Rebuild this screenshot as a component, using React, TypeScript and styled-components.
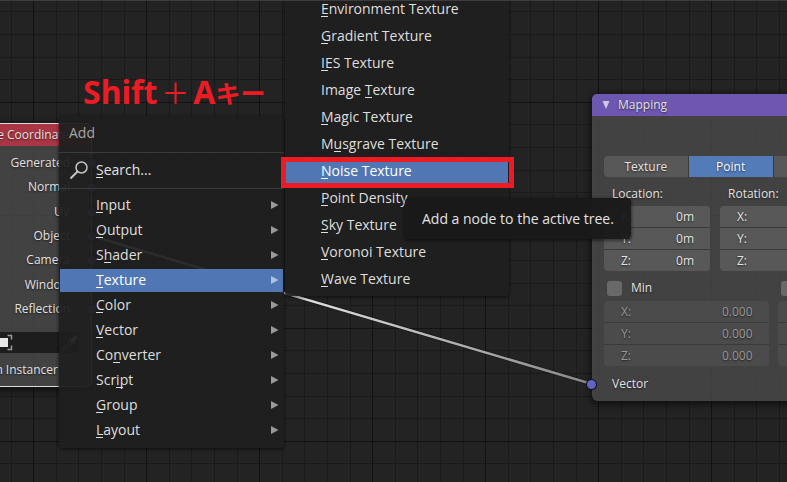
import React from "react";
import styled, { createGlobalStyle, css } from "styled-components";

const GlobalStyle = createGlobalStyle`
  * { box-sizing: border-box; }
  body { margin: 0; background: #232323; }
  button, input { font: inherit; color: inherit; }
`;

const Editor = styled.main`
  position: relative;
  min-height: 100vh;
  overflow: hidden;
  border-top: 1px solid #3c3c3c;
  color: #e2e2e2;
  font-family: "Open Sans", "Noto Sans", sans-serif;
  font-size: 14px;
  line-height: 20px;
  background-color: #232323;
  background-position: 33px 101px;
  background-size: 113px 113px;
  background-image:
    linear-gradient(90deg, #131313 1px, transparent 1px),
    linear-gradient(#131313 1px, transparent 1px),
    linear-gradient(90deg, transparent 23px, #1a1a1a 23px 24px, transparent 24px 45px, #1a1a1a 45px 46px, transparent 46px 68px, #1a1a1a 68px 69px, transparent 69px 91px, #1a1a1a 91px 92px, transparent 92px),
    linear-gradient(transparent 22px, #1a1a1a 22px 23px, transparent 23px 45px, #1a1a1a 45px 46px, transparent 46px 68px, #1a1a1a 68px 69px, transparent 69px 90px, #1a1a1a 90px 91px, transparent 91px);
`;

const Links = styled.svg`
  position: absolute;
  top: 0;
  left: 0;
  width: 100%;
  height: 100%;
`;

/* Nodes on the canvas */

const Node = styled.section`
  position: absolute;
  border-radius: 6px;
  background: rgba(72, 72, 72, 0.85);
  box-shadow: 0 2px 6px 2px rgba(0, 0, 0, 0.5);
  font-size: 12px;
  text-shadow: 0 1px 2px rgba(0, 0, 0, 0.6);
`;

const CoordinateNode = styled(Node)`
  top: 122px;
  left: -66px;
  width: 158px;
  border: 1px solid #dcdcdc;
`;

const MappingNode = styled(Node)`
  top: 93px;
  left: 592px;
  width: 362px;
`;

const NodeHeader = styled.header<{ $tone: string }>`
  display: flex;
  align-items: center;
  gap: 8px;
  height: 22px;
  padding: 0 10px;
  border-radius: 5px 5px 0 0;
  background: ${(p) => p.$tone};
`;

const NodeTitle = styled.h2`
  margin: 0;
  font: inherit;
  white-space: nowrap;
`;

const Outputs = styled.ul`
  display: grid;
  grid-auto-rows: 1fr;
  align-items: center;
  height: 170px;
  margin: 5px 0 0;
  padding: 0;
  list-style: none;
`;

const Output = styled.li`
  position: relative;
  padding-right: 21px;
  text-align: right;
`;

const Socket = styled.span<{ $side: "left" | "right" }>`
  position: absolute;
  top: 50%;
  ${(p) => p.$side}: -5px;
  width: 9px;
  height: 9px;
  margin-top: -4px;
  border-radius: 50%;
  background: #6363c7;
  box-shadow: 0 0 0 1px #111;
`;

const ObjectField = styled.div`
  display: flex;
  align-items: center;
  justify-content: space-between;
  height: 21px;
  margin: 11px 12px 0 49px;
  border-radius: 4px;
  background: #1d1d1d;
`;

const Instancer = styled.p`
  margin: 7px 33px 6px 12px;
  text-align: right;
  white-space: nowrap;
`;

const NodeBody = styled.div`
  padding: 40px 12px 7px;
`;

const Modes = styled.div`
  display: grid;
  grid-template-columns: repeat(4, 1fr);
  gap: 1px;
  overflow: hidden;
  border-radius: 4px;
  background: #383838;
`;

const Mode = styled.button<{ $active?: boolean }>`
  height: 21px;
  padding: 0;
  border: 0;
  background: ${(p) => (p.$active ? "#527bb7" : "#585858")};
  color: ${(p) => (p.$active ? "#ffffff" : "#e2e2e2")};
  text-shadow: inherit;
`;

const Vectors = styled.div`
  display: grid;
  grid-template-columns: repeat(3, 1fr);
  gap: 10px;
  margin-top: 7px;
`;

const Limits = styled.div`
  display: grid;
  grid-template-columns: repeat(2, 1fr);
  gap: 9px;
  margin-top: 7px;
`;

const Group = styled.fieldset`
  min-width: 0;
  margin: 0;
  padding: 0;
  border: 0;
`;

const GroupTitle = styled.legend`
  height: 22px;
  padding: 0 8px;
`;

const Fields = styled.div<{ $dim?: boolean }>`
  display: grid;
  grid-template-columns: minmax(0, 1fr);
  gap: 1px;
  overflow: hidden;
  border-radius: 4px;
  background: #3a3a3a;
  ${(p) =>
    p.$dim &&
    css`
      color: #989898;
    `}
`;

const Field = styled.label<{ $dim?: boolean }>`
  display: flex;
  height: 21px;
  align-items: center;
  padding: 0 16px 0 17px;
  background: ${(p) => (p.$dim ? "#4b4b4b" : "#585858")};
`;

const FieldInput = styled.input`
  flex: 1;
  min-width: 0;
  padding: 0;
  border: 0;
  background: transparent;
  text-align: right;
  text-shadow: inherit;
`;

const Check = styled.label`
  display: flex;
  align-items: center;
  gap: 9px;
  height: 20px;
  margin-bottom: 3px;
  padding-left: 3px;
`;

const CheckBox = styled.input`
  appearance: none;
  width: 15px;
  height: 15px;
  margin: 0;
  border-radius: 3px;
  background: #696969;
`;

const InputSocket = styled.div`
  position: relative;
  margin: 8px -12px 0;
  padding-left: 20px;
`;

/* Pop-up menus */

const Menu = styled.nav`
  position: absolute;
  background: rgba(31, 31, 31, 0.94);
  box-shadow: 0 1px 3px 1px rgba(0, 0, 0, 0.4);
`;

const AddMenu = styled(Menu)`
  top: 115px;
  left: 59px;
  width: 225px;
  padding-bottom: 6px;
  border-radius: 4px;
`;

const TextureMenu = styled(Menu)`
  top: -6px;
  left: 285px;
  width: 224px;
  padding-bottom: 4px;
  border-radius: 0 0 4px 4px;
`;

const MenuTitle = styled.h1`
  height: 37px;
  margin: 0;
  padding: 7px 10px;
  border-bottom: 1px solid #3b3b3b;
  color: #a6a6a6;
  font: inherit;
`;

const SearchItem = styled.button`
  display: flex;
  align-items: center;
  gap: 7px;
  width: 100%;
  height: 36px;
  padding: 0 10px 2px;
  border: 0;
  border-bottom: 1px solid #3b3b3b;
  background: transparent;
`;

const Items = styled.div<{ $roomy?: boolean }>`
  display: grid;
  gap: 2px;
  padding: ${(p) => (p.$roomy ? "1px" : "5px 1px 0")};
`;

const Item = styled.button<{ $active?: boolean; $roomy?: boolean }>`
  display: flex;
  align-items: center;
  justify-content: space-between;
  height: ${(p) => (p.$roomy ? 25 : 23)}px;
  padding: ${(p) => (p.$roomy ? "0 4px 0 35px" : "0 4px 1px 36px")};
  border: 0;
  background: ${(p) => (p.$active ? "#5077b3" : "transparent")};
  color: ${(p) => (p.$active ? "#ffffff" : "#dedede")};
  text-align: left;
`;

const Key = styled.span`
  position: relative;
  &::after {
    content: "";
    position: absolute;
    left: 0;
    bottom: 1px;
    width: 7px;
    height: 1px;
    background: currentColor;
  }
`;

const Highlight = styled.div`
  position: absolute;
  top: 156px;
  left: 281px;
  width: 233px;
  height: 31px;
  border: 5px solid #ed1c24;
  pointer-events: none;
`;

const Tooltip = styled.div`
  position: absolute;
  top: 197px;
  left: 405px;
  padding: 11px 17px 10px;
  border-radius: 4px;
  background: rgba(25, 25, 25, 0.95);
  box-shadow: 0 1px 3px 1px rgba(0, 0, 0, 0.4);
  white-space: nowrap;
`;

const Caption = styled.p`
  position: absolute;
  top: 67px;
  left: 83px;
  display: flex;
  align-items: center;
  margin: 0;
  color: #ed1c24;
  font-family: "Noto Sans", "Noto Sans CJK JP", sans-serif;
  font-size: 32px;
  font-weight: 700;
  line-height: 48px;
  white-space: nowrap;
`;

const Kana = styled.span<{ $thin?: boolean }>`
  padding: ${(p) => (p.$thin ? "0 4px" : "0")};
  font-family: "Noto Sans CJK JP", sans-serif;
  font-size: ${(p) => (p.$thin ? 28 : 25)}px;
  font-weight: ${(p) => (p.$thin ? 400 : 700)};
`;

const textures: [string, number][] = [
  ["Environment Texture", 0],
  ["Gradient Texture", 0],
  ["IES Texture", 0],
  ["Image Texture", 6],
  ["Magic Texture", 0],
  ["Musgrave Texture", 1],
  ["Noise Texture", 0],
  ["Point Density", 0],
  ["Sky Texture", 0],
  ["Voronoi Texture", 0],
  ["Wave Texture", 0],
];

const categories: [string, number][] = [
  ["Input", 0],
  ["Output", 0],
  ["Shader", 1],
  ["Texture", 0],
  ["Color", 0],
  ["Vector", 0],
  ["Converter", 2],
  ["Script", 3],
  ["Group", 0],
  ["Layout", 0],
];

const outputs = ["Generated", "Normal", "UV", "Object", "Camera", "Window", "Reflection"];

function Label({ text, at }: { text: string; at: number }) {
  return (
    <span>
      {text.slice(0, at)}
      <Key>{text[at]}</Key>
      {text.slice(at + 1)}
    </span>
  );
}

function Arrow() {
  return (
    <svg width="8" height="8" viewBox="0 0 8 8" aria-hidden="true">
      <path d="M0 0 L7.5 4 L0 8Z" fill="#fff" fillOpacity="0.55" />
    </svg>
  );
}

function Axes({ value, dim }: { value?: string; dim?: boolean }) {
  return (
    <Fields $dim={dim}>
      {["X:", "Y:", "Z:"].map((axis) => (
        <Field key={axis} $dim={dim}>
          {axis}
          <FieldInput defaultValue={value} disabled={dim} />
        </Field>
      ))}
    </Fields>
  );
}

export default function App() {
  return (
    <>
      <GlobalStyle />
      <Editor>
        <Links aria-hidden="true">
          <defs>
            <linearGradient id="link" gradientUnits="userSpaceOnUse" x1="92" y1="235" x2="592" y2="383">
              <stop offset="0" stopColor="#ffffff" />
              <stop offset="0.45" stopColor="#dcdcdc" />
              <stop offset="1" stopColor="#858585" />
            </linearGradient>
          </defs>
          <path d="M92 235 L592 383" stroke="#111" strokeOpacity="0.6" strokeWidth="4" />
          <path d="M92 235 L592 383" stroke="url(#link)" strokeWidth="2.5" />
        </Links>

        <CoordinateNode>
          <NodeHeader $tone="#a83644">
            <svg width="8" height="8" viewBox="0 0 8 8" aria-hidden="true">
              <path d="M0 0H8L4 8Z" fill="#ddd" />
            </svg>
            <NodeTitle>Texture Coordinate</NodeTitle>
          </NodeHeader>
          <Outputs>
            {outputs.map((name) => (
              <Output key={name}>
                {name}
                <Socket $side="right" />
              </Output>
            ))}
          </Outputs>
          <ObjectField>
            <svg width="30" height="17" viewBox="0 0 30 17" aria-hidden="true">
              <rect x="14" y="4" width="10" height="9" fill="#e6e6e6" />
              <path d="M23.5 1.5H27.5V5.5M27.5 11.5V15.5H23.5" fill="none" stroke="#9a9a9a" strokeWidth="1.5" />
            </svg>
            <svg width="18" height="18" viewBox="0 0 18 18" aria-hidden="true">
              <path d="M1.5 16.5L3 13L9 7L11 9L5 15Z" fill="none" stroke="#c8c8c8" />
              <path d="M8 5L13 10L14 9L13 8L16 5C17 3 15 1 13 2L10 5L9 4Z" fill="#c8c8c8" />
            </svg>
          </ObjectField>
          <Instancer>From Instancer</Instancer>
        </CoordinateNode>

        <MappingNode>
          <NodeHeader $tone="#6e57b0">
            <svg width="8" height="8" viewBox="0 0 8 8" aria-hidden="true">
              <path d="M0.5 0H7.5L4 8Z" fill="#cfc6e6" />
            </svg>
            <NodeTitle>Mapping</NodeTitle>
          </NodeHeader>
          <NodeBody>
            <Modes>
              <Mode>Texture</Mode>
              <Mode $active>Point</Mode>
              <Mode aria-label="Vector" />
              <Mode aria-label="Normal" />
            </Modes>
            <Vectors>
              <Group>
                <GroupTitle>Location:</GroupTitle>
                <Axes value="0m" />
              </Group>
              <Group>
                <GroupTitle>Rotation:</GroupTitle>
                <Axes />
              </Group>
            </Vectors>
            <Limits>
              <Group>
                <Check>
                  <CheckBox type="checkbox" />
                  Min
                </Check>
                <Axes value="0.000" dim />
              </Group>
              <Group>
                <Check>
                  <CheckBox type="checkbox" aria-label="Max" />
                </Check>
                <Axes dim />
              </Group>
            </Limits>
            <InputSocket>
              <Socket $side="left" />
              Vector
            </InputSocket>
          </NodeBody>
        </MappingNode>

        <Caption>
          Shift<Kana $thin>＋</Kana>A<Kana>キー</Kana>
        </Caption>

        <AddMenu aria-label="Add">
          <MenuTitle>Add</MenuTitle>
          <SearchItem>
            <svg width="20" height="20" viewBox="0 0 20 20" fill="none" stroke="#c4c4c4" aria-hidden="true">
              <circle cx="12.5" cy="7.5" r="5.5" strokeWidth="1.5" />
              <path d="M8.5 11.5L1.5 18.5" strokeWidth="2" />
            </svg>
            <Label text="Search..." at={0} />
          </SearchItem>
          <Items>
            {categories.map(([text, at]) => (
              <Item key={text} $active={text === "Texture"}>
                <Label text={text} at={at} />
                <Arrow />
              </Item>
            ))}
          </Items>
        </AddMenu>

        <TextureMenu aria-label="Texture">
          <Items $roomy>
            {textures.map(([text, at]) => (
              <Item key={text} $roomy $active={text === "Noise Texture"}>
                <Label text={text} at={at} />
              </Item>
            ))}
          </Items>
        </TextureMenu>

        <Highlight />
        <Tooltip role="tooltip">Add a node to the active tree.</Tooltip>
      </Editor>
    </>
  );
}
